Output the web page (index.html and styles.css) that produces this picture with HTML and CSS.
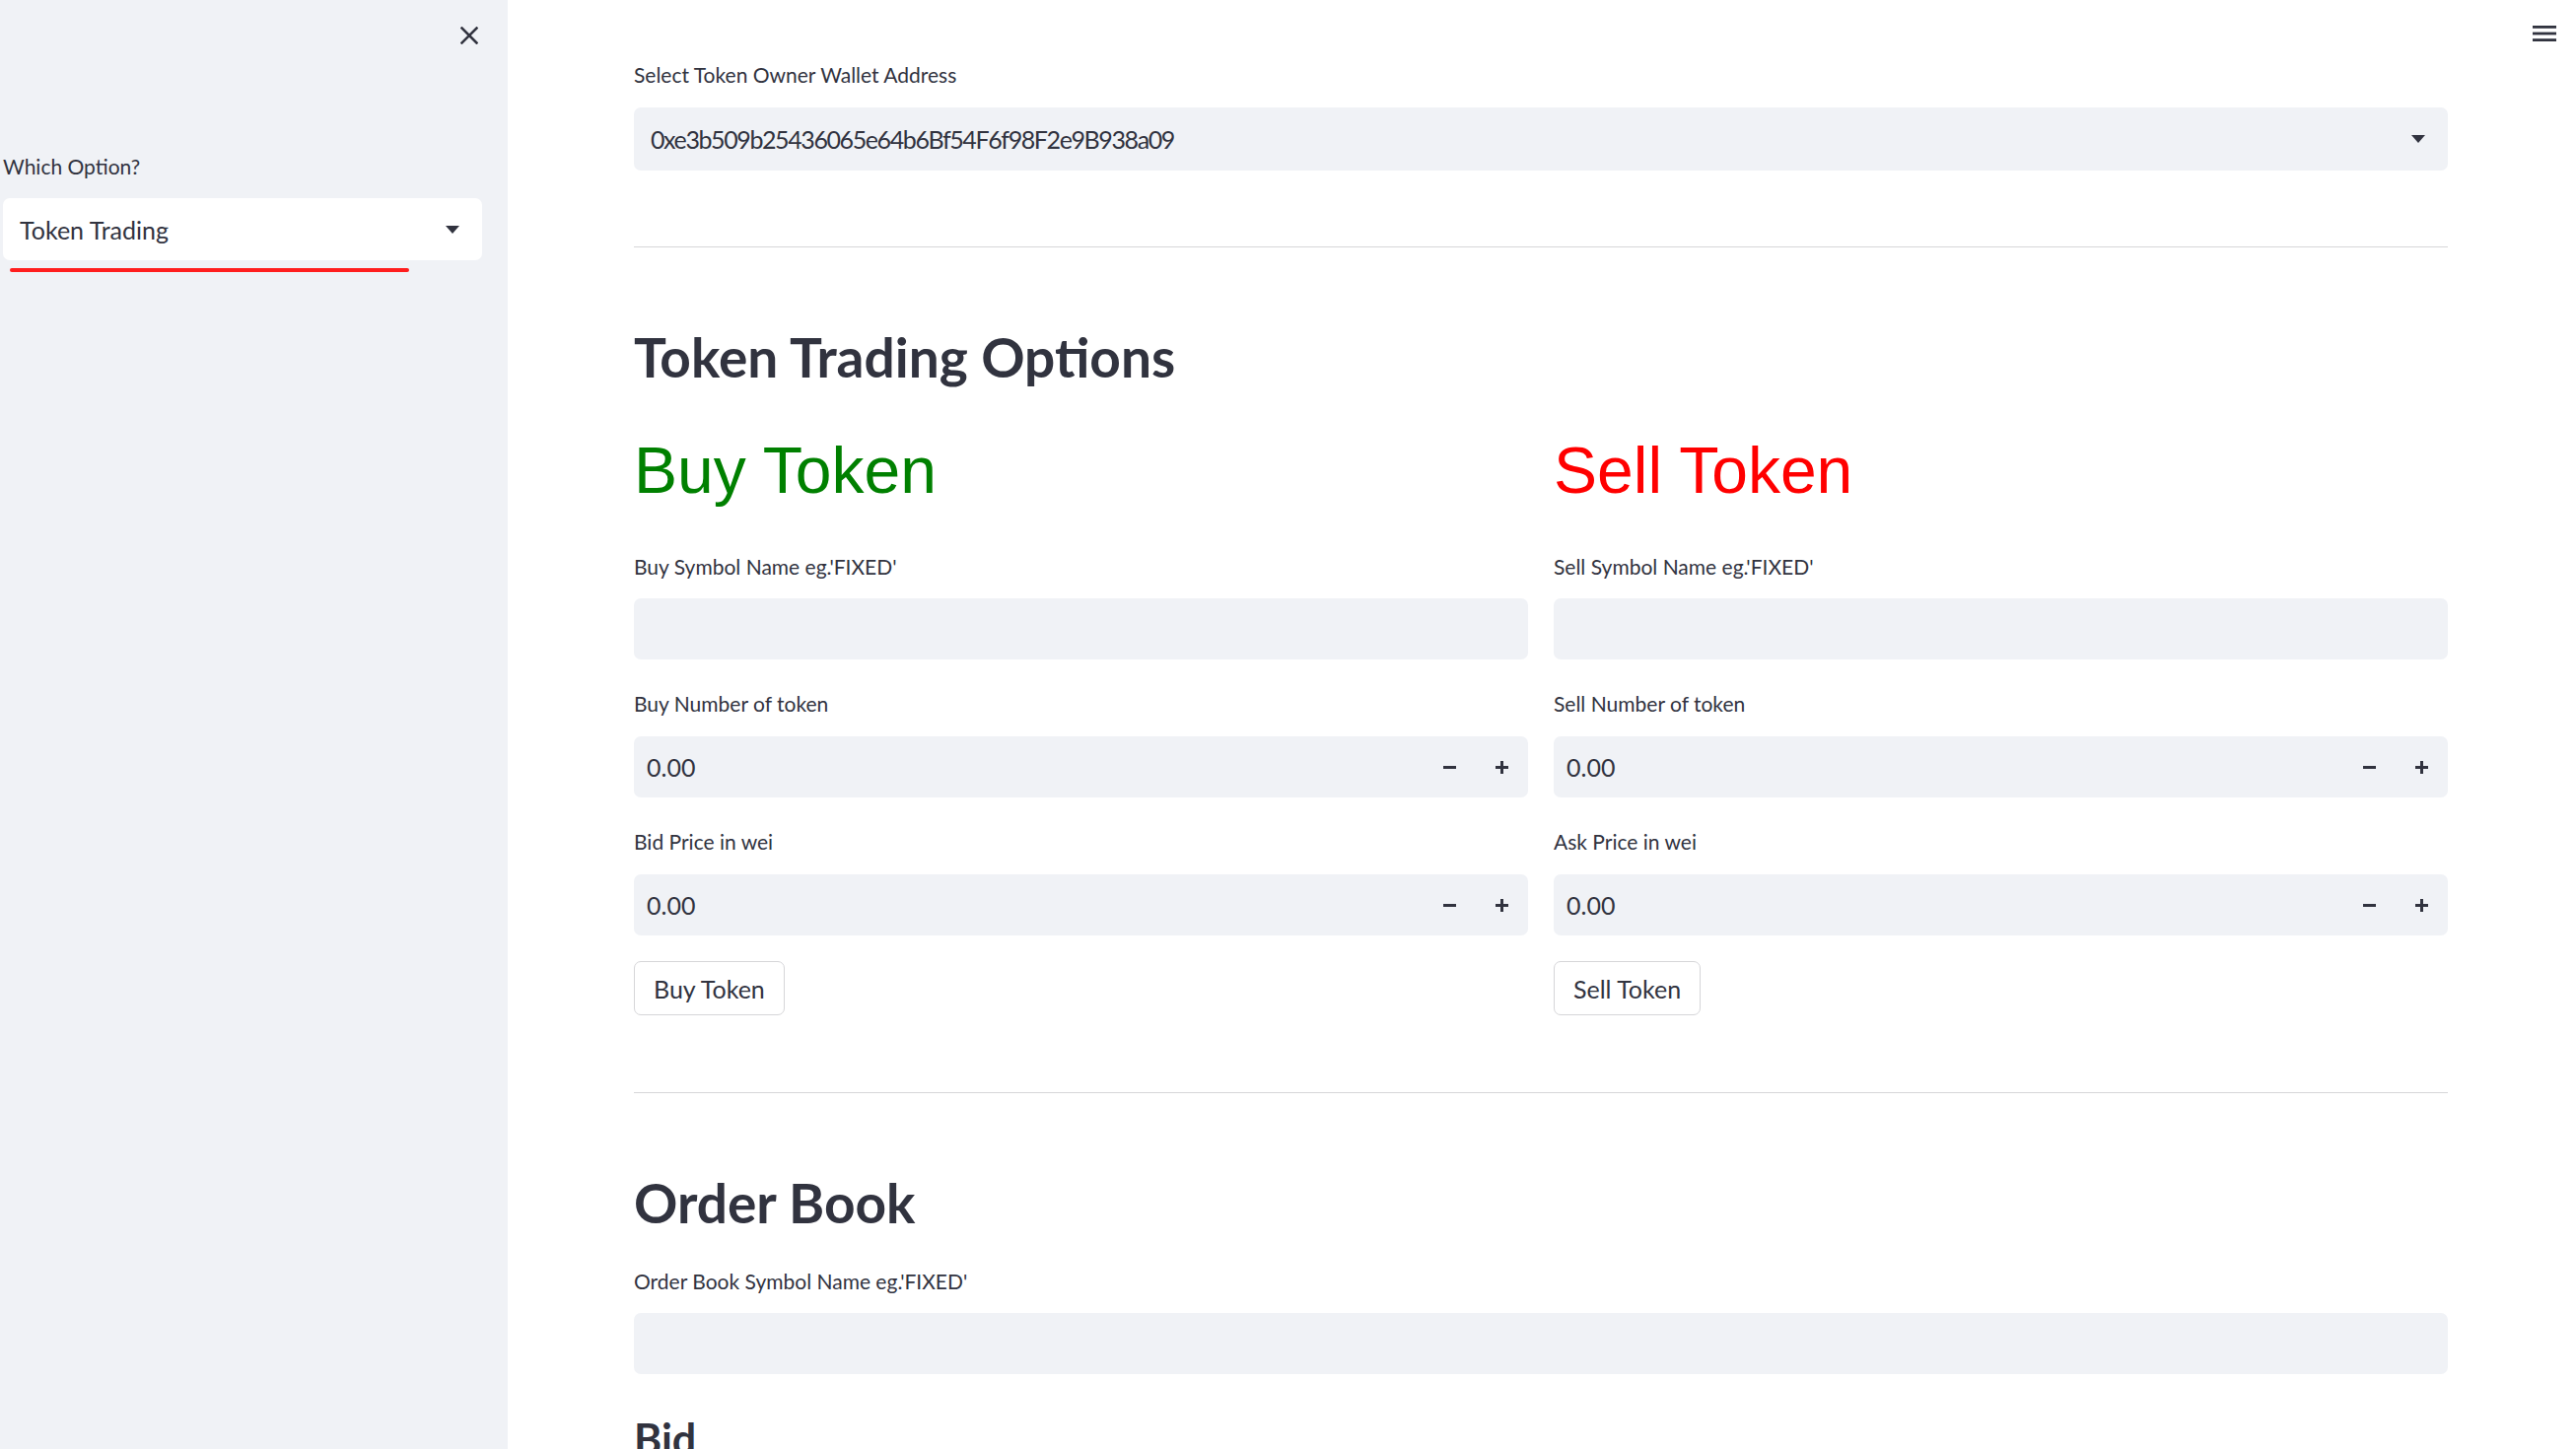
FILE: index.html
```html
<!DOCTYPE html>
<html lang="en">
<head>
<meta charset="utf-8">
<title>Token Trading</title>
<link rel="stylesheet" href="styles.css">
</head>
<body>
<div class="app">
  <aside class="sidebar">
    <div class="sb-top">
      <button class="icon-btn close-btn" aria-label="Close sidebar">
        <svg width="18" height="18" viewBox="0 0 18 18"><path d="M1.5 1.5 L16.5 16.5 M16.5 1.5 L1.5 16.5" stroke="#31333f" stroke-width="2.5" stroke-linecap="square" fill="none"/></svg>
      </button>
    </div>
    <div class="sb-widget">
      <label class="lbl">Which Option?</label>
      <div class="select select-white">
        <span class="select-value">Token Trading</span>
        <span class="caret"></span>
      </div>
      <div class="annot-line"></div>
    </div>
  </aside>

  <main class="main">
    <div class="toolbar">
      <svg width="24" height="16" viewBox="0 0 24 16"><rect x="0" y="0" width="24" height="2.8" fill="#31333f"/><rect x="0" y="6.6" width="24" height="2.8" fill="#31333f"/><rect x="0" y="13.2" width="24" height="2.8" fill="#31333f"/></svg>
    </div>
    <div class="block">
      <label class="lbl lbl-first">Select Token Owner Wallet Address</label>
      <div class="select">
        <span class="select-value addr">0xe3b509b25436065e64b6Bf54F6f98F2e9B938a09</span>
        <span class="caret"></span>
      </div>

      <hr class="divider divider-top">

      <h2 class="h2 h2-trading">Token Trading Options</h2>

      <div class="cols">
        <div class="col">
          <div class="big buy">Buy Token</div>
          <label class="lbl lbl-col">Buy Symbol Name eg.'FIXED'</label>
          <div class="text-input"></div>
          <label class="lbl lbl-next">Buy Number of token</label>
          <div class="num">
            <span class="num-value">0.00</span>
            <span class="step-btn"><svg width="13" height="3" viewBox="0 0 13 3"><rect width="13" height="3" fill="#31333f"/></svg></span>
            <span class="step-btn"><svg width="13" height="13" viewBox="0 0 13 13"><rect x="0" y="5" width="13" height="3" fill="#31333f"/><rect x="5" y="0" width="3" height="13" fill="#31333f"/></svg></span>
          </div>
          <label class="lbl lbl-next">Bid Price in wei</label>
          <div class="num">
            <span class="num-value">0.00</span>
            <span class="step-btn"><svg width="13" height="3" viewBox="0 0 13 3"><rect width="13" height="3" fill="#31333f"/></svg></span>
            <span class="step-btn"><svg width="13" height="13" viewBox="0 0 13 13"><rect x="0" y="5" width="13" height="3" fill="#31333f"/><rect x="5" y="0" width="3" height="13" fill="#31333f"/></svg></span>
          </div>
          <button class="btn">Buy Token</button>
        </div>
        <div class="col">
          <div class="big sell">Sell Token</div>
          <label class="lbl lbl-col">Sell Symbol Name eg.'FIXED'</label>
          <div class="text-input"></div>
          <label class="lbl lbl-next">Sell Number of token</label>
          <div class="num">
            <span class="num-value">0.00</span>
            <span class="step-btn"><svg width="13" height="3" viewBox="0 0 13 3"><rect width="13" height="3" fill="#31333f"/></svg></span>
            <span class="step-btn"><svg width="13" height="13" viewBox="0 0 13 13"><rect x="0" y="5" width="13" height="3" fill="#31333f"/><rect x="5" y="0" width="3" height="13" fill="#31333f"/></svg></span>
          </div>
          <label class="lbl lbl-next">Ask Price in wei</label>
          <div class="num">
            <span class="num-value">0.00</span>
            <span class="step-btn"><svg width="13" height="3" viewBox="0 0 13 3"><rect width="13" height="3" fill="#31333f"/></svg></span>
            <span class="step-btn"><svg width="13" height="13" viewBox="0 0 13 13"><rect x="0" y="5" width="13" height="3" fill="#31333f"/><rect x="5" y="0" width="3" height="13" fill="#31333f"/></svg></span>
          </div>
          <button class="btn">Sell Token</button>
        </div>
      </div>

      <hr class="divider divider-mid">

      <h2 class="h2 h2-order">Order Book</h2>
      <label class="lbl lbl-next">Order Book Symbol Name eg.'FIXED'</label>
      <div class="text-input"></div>

      <h3 class="h3">Bid</h3>
    </div>
  </main>
</div>
</body>
</html>
```

FILE: styles.css
```css
* { box-sizing: border-box; }

html, body {
  margin: 0;
  padding: 0;
  background: #ffffff;
}

body {
  font-family: "Lato", "Noto Sans", sans-serif;
  color: #31333f;
  width: 2613px;
  height: 1470px;
  overflow: hidden;
}

.app {
  display: flex;
  height: 1470px;
}

/* ---------- Sidebar ---------- */
.sidebar {
  width: 515px;
  flex: 0 0 515px;
  background: #f0f2f6;
  padding: 27px 26px 0 3px;
}

.sb-top {
  display: flex;
  justify-content: flex-end;
  height: 18px;
}

.icon-btn {
  border: 0;
  background: transparent;
  padding: 0;
  margin: 0;
  display: flex;
  cursor: pointer;
}

.close-btn {
  margin-right: 4px;
}

.sb-widget {
  position: relative;
  margin-top: 108px;
}

.lbl {
  display: block;
  font-size: 21px;
  line-height: 30px;
  height: 30px;
  padding-top: 1px;
  color: #31333f;
  white-space: nowrap;
}

.select {
  display: flex;
  align-items: center;
  justify-content: space-between;
  height: 64px;
  margin-top: 19px;
  background: #f0f2f6;
  border-radius: 7px;
  padding: 0 23px 0 17px;
}

.select-white {
  background: #ffffff;
  height: 63px;
  margin-top: 18px;
}

.select-value {
  font-size: 25px;
  color: #31333f;
  white-space: nowrap;
}

.select-value.addr {
  letter-spacing: -1.4px;
}

.caret {
  width: 0;
  height: 0;
  border-left: 7px solid transparent;
  border-right: 7px solid transparent;
  border-top: 8px solid #31333f;
}

.annot-line {
  position: absolute;
  left: 7px;
  top: 119px;
  width: 405px;
  height: 4px;
  border-radius: 2px;
  background: #ff1e1e;
}

/* ---------- Main ---------- */
.main {
  flex: 1 1 auto;
  position: relative;
  overflow: hidden;
}

.toolbar {
  position: absolute;
  top: 26px;
  right: 20px;
  display: flex;
}

.block {
  padding: 60px 130px 0 128px;
}

.divider {
  border: 0;
  height: 1px;
  background: #d6d6d9;
  margin: 0;
}

.divider-top { margin-top: 77px; }
.divider-mid { margin-top: 78px; }

.h2 {
  font-size: 55px;
  font-weight: 700;
  line-height: 70px;
  margin: 76px 0 0 0;
  color: #31333f;
}

.h3 {
  font-size: 43px;
  font-weight: 700;
  line-height: 56px;
  margin: 38px 0 0 0;
  color: #31333f;
}

.cols {
  display: grid;
  grid-template-columns: 1fr 1fr;
  column-gap: 26px;
  margin-top: 40px;
}

.col {
  display: flex;
  flex-direction: column;
  align-items: stretch;
}

.big {
  font-family: "Liberation Sans", Arial, sans-serif;
  font-size: 66px;
  line-height: 80px;
  height: 80px;
}

.buy { color: #008000; }
.sell { color: #ff0000; }

.lbl-col { margin-top: 42px; }
.lbl-next { margin-top: 29px; }

.text-input {
  height: 62px;
  margin-top: 18px;
  background: #f0f2f6;
  border-radius: 7px;
}

.num {
  display: flex;
  align-items: center;
  height: 62px;
  margin-top: 19px;
  background: #f0f2f6;
  border-radius: 7px;
  padding-left: 13px;
}

.num-value {
  flex: 1 1 auto;
  font-size: 25px;
  color: #31333f;
}

.step-btn {
  width: 53px;
  height: 62px;
  display: flex;
  align-items: center;
  justify-content: center;
}

.btn {
  align-self: flex-start;
  margin-top: 26px;
  height: 55px;
  padding: 0 19px;
  background: #ffffff;
  border: 1.5px solid #d6d6d9;
  border-radius: 7px;
  font-family: "Lato", "Noto Sans", sans-serif;
  font-size: 25px;
  color: #31333f;
}
```
